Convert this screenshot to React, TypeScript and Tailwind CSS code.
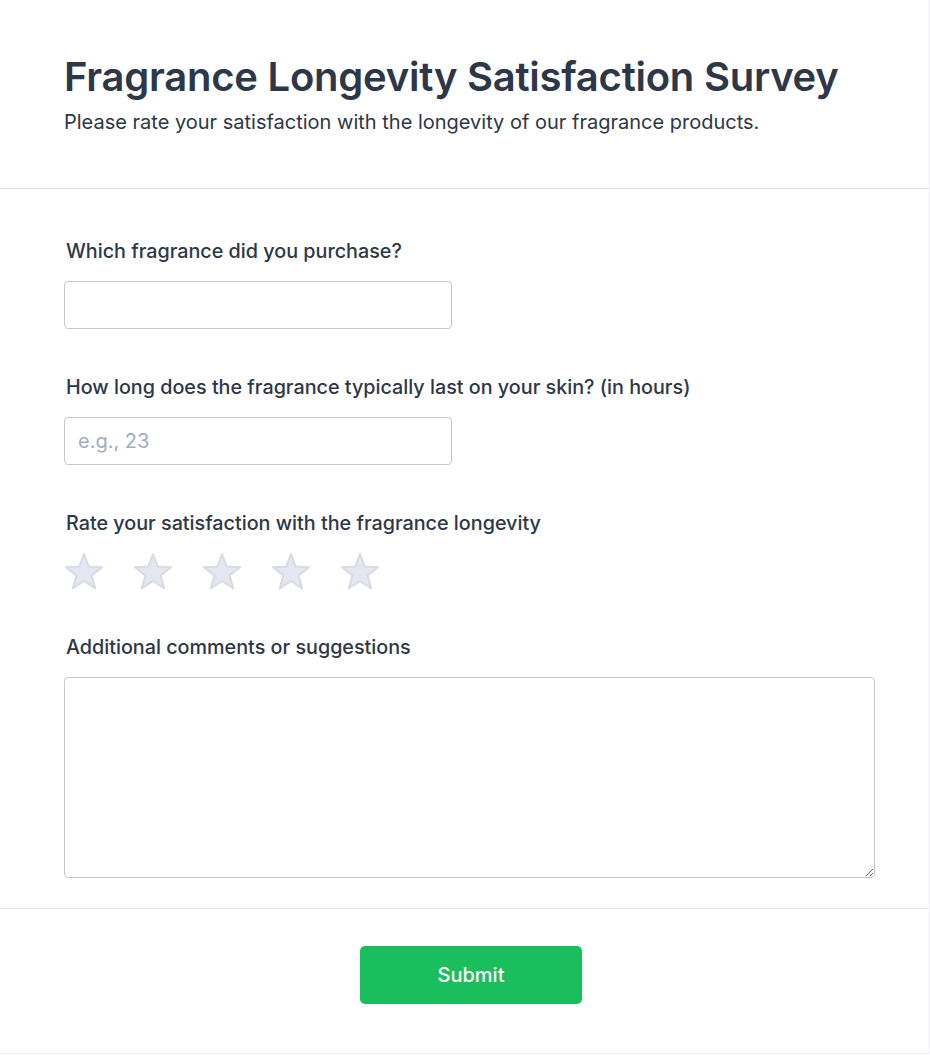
import React from 'react';

const Star = () => (
  <svg width="40" height="38" viewBox="0 0 40 38" className="block">
    <polygon
      points="20,1 24.7,13.53 38.07,14.13 27.61,22.47 31.17,35.37 20,28 8.83,35.37 12.39,22.47 1.93,14.13 15.3,13.53"
      fill="#e4e7f0"
      stroke="#d8dbe6"
      strokeWidth="2"
      strokeLinejoin="round"
    />
  </svg>
);

export default function App() {
  return (
    <div className="w-[930px] min-h-[1055px] bg-white text-[#2d3748] font-['Inter',sans-serif]">
      <div className="w-[930px] border-r border-b border-[#efeff3]">
        {/* Header */}
        <div className="pl-16 pt-[53px] pb-[52px] border-b border-[#dcdde8]">
          <h1 className="text-[40px] leading-[48px] font-semibold tracking-[-0.25px]">
            Fragrance Longevity Satisfaction Survey
          </h1>
          <p className="mt-[7px] text-[20px] leading-7">
            Please rate your satisfaction with the longevity of our fragrance products.
          </p>
        </div>

        {/* Form */}
        <div className="pl-16 pt-12 pb-[30px] flex flex-col gap-11 border-b border-[#e6e8f0]">
          <div className="flex flex-col">
            <label className="pl-[2px] mb-4 text-[19.75px] leading-7 font-medium">Which fragrance did you purchase?</label>
            <input
              type="text"
              className="w-[388px] h-12 px-[13px] text-[20px] border border-[#c5c8d2] rounded-[4px] outline-none"
            />
          </div>

          <div className="flex flex-col">
            <label className="pl-[2px] mb-4 text-[19.75px] leading-7 font-medium">
              How long does the fragrance typically last on your skin? (in hours)
            </label>
            <input
              type="text"
              placeholder="e.g., 23"
              className="w-[388px] h-12 px-[13px] text-[20px] border border-[#c5c8d2] rounded-[4px] outline-none placeholder:text-[#a3acbd]"
            />
          </div>

          <div className="flex flex-col">
            <label className="pl-[2px] mb-4 text-[19.75px] leading-7 font-medium">
              Rate your satisfaction with the fragrance longevity
            </label>
            <div className="flex gap-[29px] -mb-[2px]">
              <Star />
              <Star />
              <Star />
              <Star />
              <Star />
            </div>
          </div>

          <div className="flex flex-col">
            <label className="pl-[2px] mb-4 text-[19.75px] leading-7 font-medium">Additional comments or suggestions</label>
            <textarea className="block w-[811px] h-[201px] px-[13px] py-2 text-[20px] border border-[#c5c8d2] rounded-[4px] outline-none" />
          </div>
        </div>

        {/* Footer */}
        <div className="pl-16 pr-[51px] pt-[37px] pb-[49px] flex justify-center">
          <button className="w-[222px] h-[58px] bg-[#1abe5c] text-white text-[20px] font-medium rounded-[5px]">
            Submit
          </button>
        </div>
      </div>
    </div>
  );
}
